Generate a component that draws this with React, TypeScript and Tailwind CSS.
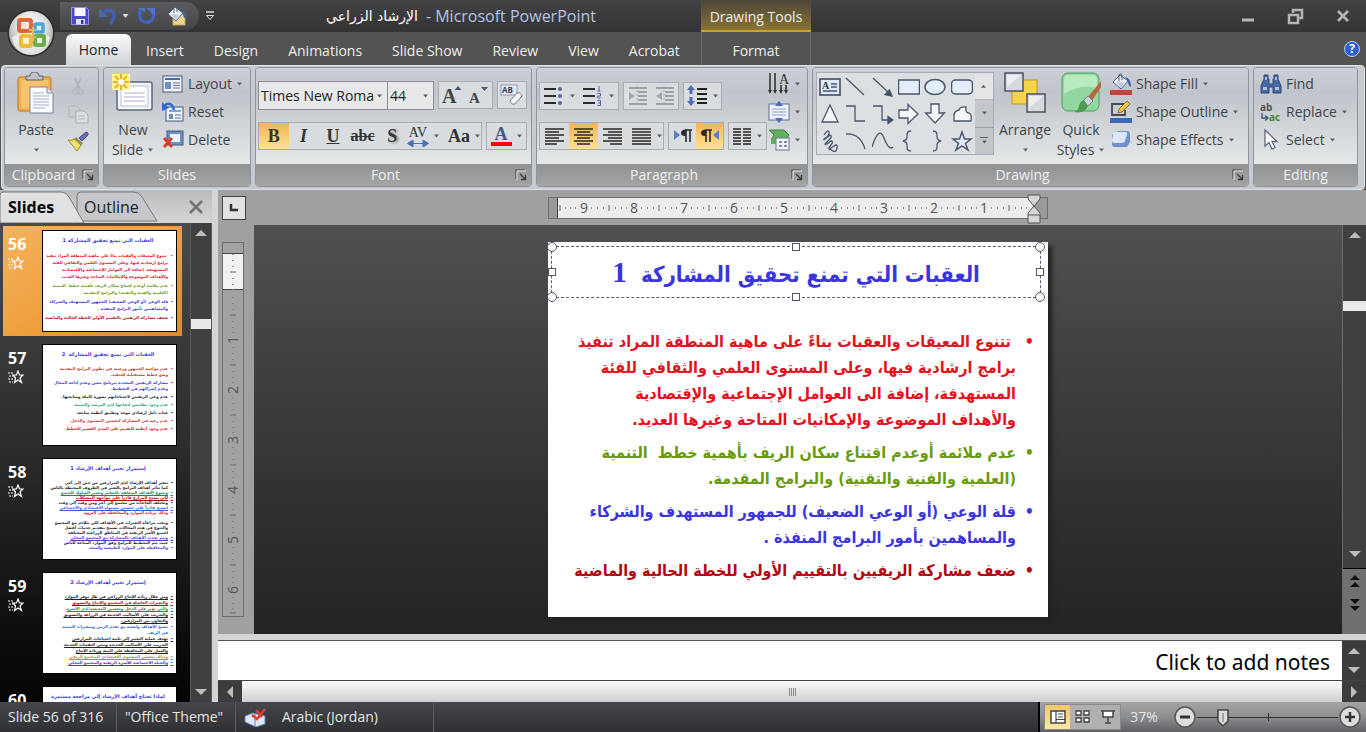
import React from 'react';

const ARABIC = "font-['DejaVu_Sans','Open_Sans',sans-serif]";
const ARABIC_NARROW = "font-['DejaVu_Sans_Condensed','DejaVu_Sans',sans-serif]";

type IconProps = { children: React.ReactNode; w?: number; h?: number };

const Icon = ({ children, w = 22, h = 22 }: IconProps) => (
  <svg width={w} height={h} viewBox={`0 0 ${w} ${h}`} fill="none" className="shrink-0" aria-hidden="true">
    {children}
  </svg>
);

const Caret = () => (
  <svg width="7" height="4" viewBox="0 0 7 4" className="shrink-0" aria-hidden="true">
    <path d="M1 0.5h5L3.5 3.5z" fill="#5a6068" />
  </svg>
);

const Launcher = () => (
  <Icon w={12} h={12}>
    <path d="M1 10V1h9" stroke="#4a4a4a" strokeWidth="1.2" />
    <path d="M2 11V2h9" stroke="#e8e8e8" />
    <path d="M5 5l5 5M10.500 6v4.500H6" stroke="#3a3a3a" strokeWidth="1.300" />
  </Icon>
);

/* ---------- ribbon icons ---------- */

const OfficeLogo = () => (
  <svg width="50" height="50" viewBox="0 0 50 50" aria-hidden="true">
    <defs>
      <radialGradient id="orb" cx="50%" cy="35%" r="65%">
        <stop offset="0" stopColor="#ffffff" />
        <stop offset="0.5" stopColor="#e2e3e5" />
        <stop offset="1" stopColor="#9b9da0" />
      </radialGradient>
    </defs>
    <circle cx="25" cy="25" r="23.500" fill="#2b2b2b" />
    <circle cx="25" cy="25" r="22" fill="url(#orb)" />
    <path d="M6 29q19-9 38 0q-2 17-19 18Q8 46 6 29z" fill="#fff" opacity="0.65" />
    <rect x="13" y="12" width="12" height="11" rx="1.500" stroke="#e2683b" strokeWidth="4" fill="#fbe3d5" />
    <rect x="29" y="16" width="8" height="8" rx="1" stroke="#4da4d8" strokeWidth="3.500" fill="#d8f0fb" />
    <rect x="15" y="28" width="10" height="10" rx="1.500" stroke="#f0bb44" strokeWidth="4" fill="#fff3ca" />
    <rect x="29" y="28" width="9" height="9" rx="1" stroke="#6dae4c" strokeWidth="4" fill="#e5f6d4" />
    <path d="M23 22h7M23 29h7M27 19v14" stroke="#eab45a" strokeWidth="2" />
  </svg>
);

const SaveIcon = () => (
  <Icon w={20} h={20}>
    <path d="M1.500 1.500h15l2 2v15h-17z" fill="#4a4cc4" stroke="#8f90ea" />
    <rect x="4.500" y="2" width="11" height="8" fill="#f5f6ff" />
    <rect x="6" y="13" width="9" height="5.500" fill="#dfe3f4" />
    <rect x="11" y="14" width="2.500" height="4" fill="#3a3c8c" />
  </Icon>
);

const UndoIcon = () => (
  <Icon w={20} h={20}>
    <path d="M4 8q6-6 11-2q3 5-3 12" stroke="#3f62b0" strokeWidth="3.500" />
    <path d="M1 2v9h9z" fill="#4668b8" />
  </Icon>
);

const RedoIcon = () => (
  <Icon w={20} h={20}>
    <path d="M4 3q-3 6 0 11q6 5 11 0q3-5 0-9" stroke="#3f66bc" strokeWidth="3.200" />
    <path d="M9 2h9v8z" fill="#4c74cc" />
    <path d="M1 2h7v4z" fill="#4c74cc" />
  </Icon>
);

const BucketIcon = ({ bar }: { bar?: string }) => (
  <Icon w={22} h={22}>
    {!bar && <rect x="8" y="9" width="12" height="11" fill="#efd58b" stroke="#c9a850" />}
    <path d="M3 9l7-7 8 6-7 8z" fill="#eef2f8" stroke="#48607e" />
    <path d="M9 8V2q2-3 3 1v4" stroke="#48607e" />
    <path d="M15 4q6 1 6 10q-3-1-3-6z" fill="#3265ab" />
    <path d="M6 9l8 1-3 5z" fill="#b9c8de" />
    {bar && <rect x="0" y="17" width="22" height="5" fill={bar} />}
  </Icon>
);

const PasteIcon = () => (
  <Icon w={40} h={42}>
    <rect x="2" y="5" width="33" height="34" rx="2" fill="#f0b04b" stroke="#b67b25" />
    <rect x="5" y="8" width="27" height="28" fill="#f7c46b" />
    <path d="M10 8V4h4q0-4 4.500-4T23 4h4v4z" fill="#bfc3c9" stroke="#5c6068" />
    <path d="M14 15h17l6 6v20H14z" fill="#fbfcff" stroke="#79839a" />
    <path d="M31 15v6h6" fill="#dfe6f2" stroke="#79839a" />
    <path d="M17 21h11M17 24h16M17 27h16M17 30h16M17 33h16M17 36h12" stroke="#a7afc6" />
  </Icon>
);

const CutIcon = () => (
  <Icon>
    <path d="M8 3l5 11M14 3L9 14" stroke="#b2b6bb" strokeWidth="2" />
    <circle cx="8" cy="17" r="2.500" stroke="#b6babf" strokeWidth="1.500" />
    <circle cx="14" cy="17" r="2.500" stroke="#b6babf" strokeWidth="1.500" />
  </Icon>
);

const CopyIcon = () => (
  <Icon>
    <path d="M2 3h8l3 3v8H2z" fill="#c9ccd0" stroke="#b1b5ba" />
    <path d="M9 8h8l4 4v8H9z" fill="#dcdfe2" stroke="#a9adb3" />
    <path d="M11 13h7M11 16h7" stroke="#b1b5ba" />
  </Icon>
);

const BrushIcon = () => (
  <Icon>
    <path d="M21 2l-2-1-7 6 3 3 6-6z" fill="#6a6db5" stroke="#4a4c8c" />
    <path d="M9 6l7 6-2 3-8-6z" fill="#8f965f" />
    <path d="M1 9q5 1 6-1l7 6q-3 5-4 6z" fill="#f1e070" stroke="#9c8730" />
  </Icon>
);

const NewSlideIcon = () => (
  <Icon w={42} h={42}>
    <rect x="5" y="10" width="35" height="28" rx="2" fill="#f4f6fa" stroke="#59677f" strokeWidth="1.500" />
    <rect x="9" y="14" width="27" height="20" fill="#fff" stroke="#b8c1d1" />
    <path d="M12 21h21M12 25h21M12 29h21" stroke="#a7afc6" />
    <rect x="0" y="2" width="18" height="16" fill="#fdf0a0" />
    <path d="M9 2v16M1 10h16M3 4l12 12M15 4L3 16" stroke="#e5b51c" strokeWidth="2" />
    <circle cx="9" cy="10" r="3" fill="#fff" />
  </Icon>
);

const LayoutIcon = () => (
  <Icon>
    <rect x="1" y="3" width="19" height="16" fill="#f1f5fb" stroke="#44587c" />
    <rect x="3" y="5" width="15" height="2" fill="#4b6aa2" />
    <rect x="3" y="9" width="6" height="7" fill="#6c8fc9" />
    <path d="M11 10h7M11 12.500h7M11 15h7" stroke="#5d6f92" />
  </Icon>
);

const ResetIcon = () => (
  <Icon>
    <rect x="4" y="6" width="17" height="14" fill="#f1f5fb" stroke="#44587c" />
    <rect x="7" y="9" width="12" height="2" fill="#8aa3cb" />
    <rect x="7" y="13" width="4" height="5" fill="#6c8fc9" />
    <path d="M13 14h6M13 17h6" stroke="#5d6f92" />
    <path d="M3 4q7-4 9 5" stroke="#2e6bd0" strokeWidth="2.500" />
    <path d="M0 1v9l7-3z" fill="#2e6bd0" />
  </Icon>
);

const DeleteIcon = () => (
  <Icon>
    <rect x="5" y="2" width="16" height="14" fill="#6d8fc6" stroke="#44587c" />
    <rect x="8" y="5" width="10" height="8" fill="#eef4fc" />
    <path d="M2 9l8 9M10 9l-8 9" stroke="#dc3a2b" strokeWidth="2.800" />
  </Icon>
);

const ClearFormatIcon = () => (
  <Icon w={24} h={22}>
    <rect x="1" y="1" width="16" height="10" fill="#e8edf5" stroke="#8c98ad" />
    <text x="2" y="9" fontSize="8" fontWeight="700" fill="#33425c" fontFamily="Open Sans">AB</text>
    <path d="M10 17l7-8q4-1 5 3l-7 8q-4 1-5-3z" fill="#f8fafd" stroke="#6a7890" />
  </Icon>
);

const GrowIcon = ({ small }: { small?: boolean }) => (
  <Icon w={22} h={22}>
    <text x="1" y="19" fontSize={small ? 15 : 20} fontWeight="700" fill="#444" fontFamily="Liberation Serif">A</text>
    {small ? <path d="M13 3h7l-3.500 4z" fill="#4a5a78" /> : <path d="M13.500 6h7L17 2z" fill="#4a5a78" />}
  </Icon>
);

const BulletsIcon = () => (
  <Icon>
    <path d="M1 4h12M1 11h12M1 18h12" stroke="#2b2b2b" strokeWidth="1.800" />
    <circle cx="17" cy="4" r="2" fill="#5562ad" />
    <circle cx="17" cy="11" r="2" fill="#5562ad" />
    <circle cx="17" cy="18" r="2" fill="#5562ad" />
  </Icon>
);

const NumberingIcon = () => (
  <Icon>
    <path d="M1 4h12M1 11h12M1 18h12" stroke="#2b2b2b" strokeWidth="1.800" />
    <path d="M17 1v5M15.500 6h3M15.500 8.500h3v2.500h-3v2h3M15.500 15.500h3v5h-3M16 18h2" stroke="#5562ad" />
  </Icon>
);

const IndentIcon = ({ flip }: { flip?: boolean }) => (
  <Icon>
    <path d="M2 3h18M11 7h9M11 11h9M11 15h9M2 19h18" stroke="#898d92" strokeWidth="1.500" />
    <path d={flip ? 'M8 7v8L2 11z' : 'M2 7v8l6-4z'} fill="#a4a8ad" />
    <path d="M10 1v20" stroke="#a4a8ad" strokeDasharray="2 2" />
  </Icon>
);

const SpacingIcon = () => (
  <Icon>
    <path d="M11 4h10M11 9h10M11 14h10M11 18h10" stroke="#222" strokeWidth="1.800" />
    <path d="M5 0l4 5H6.500v4h-3V5H1zM5 21l4-5H6.500v-4h-3v4H1z" fill="#4c6cbc" />
  </Icon>
);

const AlignIcon = ({ kind }: { kind: 'left' | 'center' | 'right' | 'justify' }) => {
  const d = {
    left: 'M1 3h19M1 6h14M1 9h19M1 12h14M1 15h19M1 18h12',
    center: 'M1 3h19M4 6h13M1 9h19M4 12h13M1 15h19M4 18h13',
    right: 'M1 3h19M6 6h14M1 9h19M6 12h14M1 15h19M8 18h12',
    justify: 'M1 3h19M1 6h19M1 9h19M1 12h19M1 15h19M1 18h19',
  }[kind];
  return (
    <Icon w={21} h={20}>
      <path d={d} stroke="#2a2623" strokeWidth="1.700" />
    </Icon>
  );
};

const PilcrowIcon = ({ rtl }: { rtl?: boolean }) => (
  <Icon w={20} h={20}>
    <path d={rtl ? 'M19 4v10l-6-5z' : 'M1 4v10l6-5z'} fill="#5480cc" />
    <g transform={rtl ? undefined : 'translate(7 0)'}>
      <path d="M12 4H5M6 4v12M10 4v12" stroke="#2b2b2b" strokeWidth="1.600" />
      <path d="M6 3.500q-5 0-5 3.500t5 3z" fill="#2b2b2b" />
    </g>
  </Icon>
);

const ColumnsIcon = () => (
  <Icon w={20} h={20}>
    <path d="M1 3h8M1 6h8M1 9h8M1 12h8M1 15h8M1 18h8M11 3h8M11 6h8M11 9h8M11 12h8M11 15h8M11 18h8" stroke="#222" strokeWidth="1.700" />
  </Icon>
);

const TextDirectionIcon = () => (
  <Icon>
    <path d="M2 0v18M7 0v18M13 12v6M18 12v6" stroke="#333" strokeWidth="1.600" />
    <path d="M0 17h4l-2 4zM5 17h4l-2 4zM11 17h4l-2 4zM16 17h4l-2 4z" fill="#333" />
    <text x="11" y="11" fontSize="14" fill="#333" fontFamily="Liberation Serif">A</text>
  </Icon>
);

const AlignTextIcon = () => (
  <Icon>
    <rect x="1" y="3" width="20" height="16" fill="#eef3fb" stroke="#5e6f96" />
    <path d="M4 8h14M4 11h14M4 14h14" stroke="#8ba0cc" />
    <path d="M11 0l4 5H7zM11 22l4-5H7z" fill="#4a69ba" />
  </Icon>
);

const SmartArtIcon = () => (
  <Icon>
    <path d="M1 1h15l5 5-3 5H3l3-5z" fill="#62b05c" stroke="#3f8440" />
    <path d="M3 10h8v5H3z" fill="#62b05c" />
    <rect x="8" y="9" width="13" height="12" fill="#f3f6fb" stroke="#68758f" />
    <path d="M11 13h3M16 13h3M11 17h3M16 17h3" stroke="#7d8ca8" strokeWidth="2" />
  </Icon>
);

const ArrangeIcon = () => (
  <Icon w={42} h={42}>
    <rect x="8" y="8" width="25" height="24" fill="#f7d54a" stroke="#bd9522" />
    <rect x="1" y="1" width="18" height="18" fill="#d6d9de" stroke="#4c525c" strokeWidth="1.500" />
    <rect x="23" y="22" width="18" height="18" fill="#d6d9de" stroke="#4c525c" strokeWidth="1.500" />
    <path d="M3 3h14l-14 12zM25 24h14l-14 12z" fill="#eceef1" />
  </Icon>
);

const QuickStylesIcon = () => (
  <Icon w={42} h={42}>
    <rect x="2" y="1" width="37" height="38" rx="6" fill="#93d7a0" stroke="#4d9c5e" />
    <path d="M4 8q0-5 5-5h23q5 0 5 5v8q-16-5-33 6z" fill="#b9ebc0" />
    <path d="M41 9L27 26l4 4 10-15z" fill="#b9663c" />
    <path d="M28 24l-5 5 5 5 5-5z" fill="#cfd2d8" stroke="#7c8088" />
    <path d="M24 28q-4 1-5 6t-5 6q11 2 14-6z" fill="#4d9a52" />
  </Icon>
);

const OutlineIcon = () => (
  <Icon>
    <path d="M15 3H2v11h13V9" stroke="#454b55" strokeWidth="1.800" />
    <path d="M8 12l1-4 8-8 3 3-8 8z" fill="#f3c24e" stroke="#8b6a24" />
    <rect x="0" y="17" width="22" height="5" fill="#3c68b4" />
  </Icon>
);

const EffectsIcon = () => (
  <Icon>
    <path d="M2 7q0-2 2-3l4-2h9q3 0 3 3v8l-3 5H5q-3 0-3-3z" fill="#6f90cd" />
    <path d="M5 3h10q3 0 2 3l-2 6q-1 2-3 2H4q-2 0-2-2l1-7q0-2 2-2z" fill="#dbe7f8" />
  </Icon>
);

const FindIcon = () => (
  <Icon>
    <path d="M4 2h4v4h1v5h4V6h1V2h4v4l3 7v7h-8v-6H9v6H1v-7l3-7z" fill="#4668a4" stroke="#2e4674" />
    <path d="M3 14h4v3H3zM15 14h4v3h-4zM5 4h2v3H5zM15 4h2v3h-2z" fill="#a9c0e4" />
  </Icon>
);

const ReplaceIcon = () => (
  <Icon>
    <text x="0" y="10" fontSize="10" fontWeight="700" fill="#555" fontFamily="Open Sans">ab</text>
    <text x="9" y="20" fontSize="10" fontWeight="700" fill="#3b8a36" fontFamily="Open Sans">ac</text>
    <path d="M2 12v5h5M5 14.500l3 2.500-3 2.500" stroke="#44587c" strokeWidth="1.400" />
  </Icon>
);

const SelectIcon = () => (
  <Icon>
    <path d="M5 1v16l4-3.500L12 20l3-1.500-3-6h5z" fill="#fff" stroke="#59677f" strokeWidth="1.300" />
  </Icon>
);

const SHAPES: [string, React.ReactNode][] = [
  ['Text Box', <g><rect x="1" y="3" width="20" height="16" fill="#dfeaf8" strokeWidth="1.700" /><text x="3" y="13" fontSize="10" fontWeight="700" stroke="none" fill="#333" fontFamily="Liberation Serif">A</text><path d="M12 8h6M12 11h6M4 15h14" /></g>],
  ['Line', <path d="M1 2l18 17" />],
  ['Arrow', <g><path d="M1 2l16 15" /><path d="M20 20l-7-1.500 4.500-4.500z" fill="#3f4a63" /></g>],
  ['Rectangle', <rect x="0.500" y="4" width="21" height="14" fill="#e4eefa" strokeWidth="1.500" />],
  ['Oval', <ellipse cx="11" cy="11" rx="10" ry="7.500" fill="#e4eefa" strokeWidth="1.500" />],
  ['Rounded Rectangle', <rect x="0.500" y="4" width="21" height="14" rx="4" fill="#e4eefa" strokeWidth="1.500" />],
  ['Triangle', <path d="M11 2l8 17H3z" fill="#f4f6fa" />],
  ['Elbow Connector', <path d="M1 3h9v15h10" />],
  ['Elbow Arrow', <g><path d="M1 3h9v14h7" /><path d="M21 17l-5-3.500v7z" fill="#3f4a63" /></g>],
  ['Right Arrow', <path d="M1 7h9V1.500L20 11l-10 9.500V15H1z" fill="#f4f6fa" />],
  ['Down Arrow', <path d="M7 1v9H1.500L11 20l9.500-10H15V1z" fill="#f4f6fa" />],
  ['Freeform', <path d="M3 18v-7q1-3 5-4 1-4 7-3-1 6 3 6 3 1 2 8z" fill="#f4f6fa" />],
  ['Scribble', <path d="M5 5q4-6 5-3T5 9q-1 2 6-4 3 1-1 5t-4 4q0 2 6-3 3 0 0 4t-2 4 5-3 3 2-4 3-3-2" />],
  ['Curve', <path d="M1 4q14-1 19 15" />],
  ['Wave', <path d="M0 17Q7-5 12 8t9 9" />],
  ['Left Brace', <path d="M13 1q-4 0-4 4v2q0 3-4 4 4 1 4 4v2q0 4 4 4" />],
  ['Right Brace', <path d="M9 1q4 0 4 4v2q0 3 4 4-4 1-4 4v2q0 4-4 4" />],
  ['Star', <path d="M11 2l2.500 7H20l-5.500 4.500L17 20l-6-4-6 4 2.500-6.500L2 9h6.500z" fill="#dfeaf8" strokeWidth="1.500" />],
];

/* ---------- ribbon building blocks ---------- */

type GroupProps = { label: string; className: string; launcher?: boolean; children: React.ReactNode };

const Group = ({ label, className, launcher, children }: GroupProps) => (
  <section aria-label={label} className={`flex flex-col overflow-hidden rounded-sm border border-[#8f949b] ${className}`}>
    <div className="flex h-[96px] bg-linear-to-b from-[#cdd0d5] via-[#c0c4cb] via-25% to-[#e4e8e9]">{children}</div>
    <div className="flex h-[22px] items-center bg-linear-to-b from-[#8f9193] to-[#a3a5a6] text-sm text-[#f0f0f0]">
      <span className="flex-1 text-center">{label}</span>
      {launcher && (
        <button className="mr-1" aria-label={`${label} options`}>
          <Launcher />
        </button>
      )}
    </div>
  </section>
);

const RowButton = ({ icon, label, caret }: { icon: React.ReactNode; label: string; caret?: boolean }) => (
  <button className="flex h-7 items-center gap-1 whitespace-nowrap">
    {icon}
    <span>{label}</span>
    {caret && <Caret />}
  </button>
);

const Box = ({ className = '', children }: { className?: string; children: React.ReactNode }) => (
  <div className={`flex h-[28px] items-stretch border border-[#a9adb3] bg-[#d9dddf] ${className}`}>{children}</div>
);

type ToolProps = { label: string; active?: boolean; caret?: boolean; className?: string; children: React.ReactNode };

const Tool = ({ label, active, caret, className = '', children }: ToolProps) => (
  <button
    aria-label={label}
    className={`flex flex-1 items-center justify-center gap-1 leading-none text-[#333] ${active ? 'bg-linear-to-b from-[#f5b45a] to-[#fde28d]' : ''} ${className}`}
  >
    {children}
    {caret && <Caret />}
  </button>
);

const Combo = ({ label, value, className }: { label: string; value: string; className: string }) => (
  <div className={`relative h-[29px] border border-[#8a8d92] bg-[#e6e8e9] ${className}`}>
    <select aria-label={label} className="h-full w-full appearance-none overflow-hidden pr-3 pl-0.5 text-sm text-[#222]">
      <option>{value}</option>
    </select>
    <span className="pointer-events-none absolute top-0 right-1 flex h-full items-center">
      <Caret />
    </span>
  </div>
);

const Ribbon = () => (
  <div className="mx-px flex h-[125px] items-start gap-1 rounded-sm border border-[#dfe2e5] bg-[#c6cbd1] px-0.5 pt-px text-sm text-[#404448]">
    <Group label="Clipboard" launcher className="w-[95px]">
      <button className="flex w-[62px] flex-col items-center pt-1">
        <PasteIcon />
        <span className="mt-1.5 leading-5">Paste</span>
        <span className="mt-2"><Caret /></span>
      </button>
      <div className="flex flex-col pt-1">
        <button aria-label="Cut" className="flex h-7 items-center"><CutIcon /></button>
        <button aria-label="Copy" className="flex h-7 items-center"><CopyIcon /></button>
        <button aria-label="Format Painter" className="flex h-7 items-center"><BrushIcon /></button>
      </div>
    </Group>

    <Group label="Slides" className="w-[148px]">
      <button className="flex w-[58px] flex-col items-center pt-1">
        <NewSlideIcon />
        <span className="mt-1.5 leading-5">New</span>
        <span className="flex items-center gap-1 leading-5">Slide <Caret /></span>
      </button>
      <div className="flex flex-col pt-0.5">
        <RowButton icon={<LayoutIcon />} label="Layout" caret />
        <RowButton icon={<ResetIcon />} label="Reset" />
        <RowButton icon={<DeleteIcon />} label="Delete" />
      </div>
    </Group>

    <Group label="Font" launcher className="w-[277px]">
      <div className="flex flex-1 flex-col gap-3 pt-[13px] pr-1 pl-0.5">
        <div className="flex">
          <Combo label="Font name" value="Times New Roman" className="w-[130px]" />
          <Combo label="Font size" value="44" className="-ml-px w-[47px]" />
          <Box className="ml-1 w-[55px]">
            <Tool label="Grow Font"><GrowIcon /></Tool>
            <Tool label="Shrink Font"><GrowIcon small /></Tool>
          </Box>
          <Box className="ml-auto w-[30px]">
            <Tool label="Clear Formatting"><ClearFormatIcon /></Tool>
          </Box>
        </div>
        <div className="flex justify-between font-['Liberation_Serif',serif] text-lg font-bold">
          <Box className="w-[224px]">
            <Tool label="Bold" active>B</Tool>
            <Tool label="Italic"><i>I</i></Tool>
            <Tool label="Underline"><u>U</u></Tool>
            <Tool label="Strikethrough" className="text-base"><s>abc</s></Tool>
            <Tool label="Shadow"><span className="drop-shadow-[2px_1px_1px_#888]">S</span></Tool>
            <Tool label="Character Spacing" caret className="text-sm">
              <span className="flex flex-col items-center font-normal">
                AV
                <Icon w={22} h={7}><path d="M6 3.500h10M0.500 3.500L6 0v7zM21.500 3.500L16 0v7z" fill="#4c6cbc" stroke="#4c6cbc" /></Icon>
              </span>
            </Tool>
            <Tool label="Change Case" caret className="pl-2">Aa</Tool>
          </Box>
          <Box className="w-[41px]">
            <Tool label="Font Color" caret>
              <span className="border-b-4 border-[#f00] px-1 leading-4 text-[#41598c]">A</span>
            </Tool>
          </Box>
        </div>
      </div>
    </Group>

    <Group label="Paragraph" launcher className="w-[272px]">
      <div className="flex w-[231px] flex-col gap-3 pt-[14px] pl-0.5">
        <div className="flex gap-1">
          <Box className="w-[80px]">
            <Tool label="Bullets" caret><BulletsIcon /></Tool>
            <Tool label="Numbering" caret><NumberingIcon /></Tool>
          </Box>
          <Box className="w-[56px]">
            <Tool label="Decrease Indent"><IndentIcon /></Tool>
            <Tool label="Increase Indent"><IndentIcon flip /></Tool>
          </Box>
          <Box className="w-[39px]">
            <Tool label="Line Spacing" caret><SpacingIcon /></Tool>
          </Box>
        </div>
        <div className="flex gap-1">
          <Box className="w-[125px]">
            <Tool label="Align Left"><AlignIcon kind="left" /></Tool>
            <Tool label="Center" active><AlignIcon kind="center" /></Tool>
            <Tool label="Align Right"><AlignIcon kind="right" /></Tool>
            <Tool label="Justify" caret className="pl-1"><AlignIcon kind="justify" /></Tool>
          </Box>
          <Box className="w-[56px]">
            <Tool label="Left-to-Right"><PilcrowIcon /></Tool>
            <Tool label="Right-to-Left" active><PilcrowIcon rtl /></Tool>
          </Box>
          <Box className="w-[39px]">
            <Tool label="Columns" caret><ColumnsIcon /></Tool>
          </Box>
        </div>
      </div>
      <div className="flex flex-col pt-0.5">
        <button aria-label="Text Direction" className="flex h-7 items-center gap-1"><TextDirectionIcon /><Caret /></button>
        <button aria-label="Align Text" className="flex h-7 items-center gap-1"><AlignTextIcon /><Caret /></button>
        <button aria-label="Convert to SmartArt" className="flex h-7 items-center gap-1"><SmartArtIcon /><Caret /></button>
      </div>
    </Group>

    <Group label="Drawing" launcher className="flex-1">
      <div className="mt-1 ml-[3px] flex h-[83px] w-[178px] border border-[#a9adb3] bg-[#dce0e3]">
        <div className="grid flex-1 grid-cols-6 grid-rows-3">
          {SHAPES.map(([name, shape]) => (
            <button key={name} aria-label={name} className="flex items-center justify-center">
              <svg width="22" height="22" viewBox="0 0 22 22" fill="none" stroke="#4a566e" strokeWidth="1.300">{shape}</svg>
            </button>
          ))}
        </div>
        <div className="flex w-[18px] flex-col bg-[#c3c6ca]">
          <button aria-label="Row up" className="flex flex-1 rotate-180 items-center justify-center bg-[#e3e5e7]"><Caret /></button>
          <button aria-label="Row down" className="flex flex-1 items-center justify-center border-y border-[#9a9da2]"><Caret /></button>
          <button aria-label="More shapes" className="flex flex-1 flex-col items-center justify-center gap-0.5">
            <span className="h-px w-2 bg-[#5a6068]" />
            <Caret />
          </button>
        </div>
      </div>
      <button className="ml-1 flex w-[54px] flex-col items-center pt-1">
        <ArrangeIcon />
        <span className="mt-1.5 leading-5">Arrange</span>
        <span className="mt-2"><Caret /></span>
      </button>
      <button className="flex w-[58px] flex-col items-center pt-1">
        <QuickStylesIcon />
        <span className="mt-1.5 leading-5">Quick</span>
        <span className="flex items-center gap-1 leading-5">Styles <Caret /></span>
      </button>
      <div className="flex flex-col pt-0.5">
        <RowButton icon={<BucketIcon bar="#c0453a" />} label="Shape Fill" caret />
        <RowButton icon={<OutlineIcon />} label="Shape Outline" caret />
        <RowButton icon={<EffectsIcon />} label="Shape Effects" caret />
      </div>
    </Group>

    <Group label="Editing" className="mr-1 w-[105px]">
      <div className="flex flex-col pt-0.5 pl-1.5">
        <RowButton icon={<FindIcon />} label="Find" />
        <RowButton icon={<ReplaceIcon />} label="Replace" caret />
        <RowButton icon={<SelectIcon />} label="Select" caret />
      </div>
    </Group>
  </div>
);

/* ---------- header ---------- */

const TABS = ['Insert', 'Design', 'Animations', 'Slide Show', 'Review', 'View', 'Acrobat'];

const Header = () => (
  <header className="grid grid-cols-[60px_641px_110px_1fr] grid-rows-[32px_33px] bg-[#535353] text-sm text-[#eee]">
    <button aria-label="Office Button" className="row-span-2 bg-linear-to-b from-[#434345] via-[#333335] via-50% to-[#535353] to-50% pl-[6px]">
      <OfficeLogo />
    </button>
    <div className="flex items-center bg-linear-to-b from-[#434345] to-[#333335]">
      <div className="flex h-[28px] items-center gap-2 rounded-r-full bg-linear-to-b from-[#5b5b5e] to-[#454548] pr-3 pl-2.5">
        <button aria-label="Save"><SaveIcon /></button>
        <button aria-label="Undo" className="flex items-center gap-1">
          <UndoIcon />
          <svg width="7" height="4" viewBox="0 0 7 4"><path d="M0.500 0h6l-3 4z" fill="#ddd" /></svg>
        </button>
        <button aria-label="Redo"><RedoIcon /></button>
        <button aria-label="Fill"><BucketIcon /></button>
      </div>
      <button aria-label="Customize Quick Access Toolbar" className="ml-1.5">
        <Icon w={10} h={12}>
          <path d="M1 2h8" stroke="#ddd" strokeWidth="1.500" />
          <path d="M1.500 5.500h7L5 9.500z" stroke="#ddd" />
        </Icon>
      </button>
      <h1 className="flex flex-1 items-center justify-center gap-2 pl-1.5 text-base text-[#b4c4e4]">
        <span dir="rtl" lang="ar" className={`${ARABIC} text-sm text-white`}>الإرشاد الزراعي</span>
        <span>- Microsoft PowerPoint</span>
      </h1>
    </div>
    <div className="flex items-center justify-center border-b-2 border-[#c9a227] bg-linear-to-b from-[#4b4637] to-[#8a7434] pt-1">Drawing Tools</div>
    <div className="flex items-center justify-end gap-8 bg-linear-to-b from-[#434345] to-[#333335] pr-4 text-[#b5b5b5]">
      <button aria-label="Minimize"><Icon w={14} h={14}><path d="M1 11h12" stroke="currentColor" strokeWidth="3" /></Icon></button>
      <button aria-label="Restore"><Icon w={17} h={17}><path d="M6 5V2h9v8h-3" stroke="currentColor" strokeWidth="2.500" /><rect x="2" y="7" width="9" height="8" stroke="currentColor" strokeWidth="2.500" /></Icon></button>
      <button aria-label="Close"><Icon w={14} h={14}><path d="M2 2l10 10M12 2L2 12" stroke="currentColor" strokeWidth="2.800" /></Icon></button>
    </div>

    <nav className="flex items-stretch pl-1.5" aria-label="Ribbon tabs">
      <button className="mt-0.5 flex w-[65px] items-center justify-center rounded-t-md bg-linear-to-b from-[#fafafa] to-[#cfd3d7] text-[#222]">Home</button>
      {TABS.map((tab) => (
        <button key={tab} className="px-[15px] pt-1 whitespace-nowrap">{tab}</button>
      ))}
    </nav>
    <button className="border-x border-[#6f6b5c] pt-1">Format</button>
    <div className="flex items-center justify-end pr-1.5">
      <button aria-label="Help" className="flex size-4 items-center justify-center rounded-full border border-[#b9cdf6] bg-[#2e5fd6] text-xs font-bold text-white">?</button>
    </div>
  </header>
);

/* ---------- slide content ---------- */

type Para = { color: string; lines: string[] };

const PARAS: Para[] = [
  {
    color: 'text-[#e8101c]',
    lines: [
      ' تتنوع المعيقات والعقبات بناءً على ماهية المنطقة المراد تنفيذ',
      'برامج ارشادية فيها، وعلى المستوى العلمي والثقافي للفئة',
      'المستهدفة، إضافة الى العوامل الإجتماعية والإقتصادية',
      'والأهداف الموضوعة والإمكانيات المتاحة وغيرها العديد.',
    ],
  },
  {
    color: 'text-[#6a9a10]',
    lines: ['عدم ملائمة أوعدم اقتناع سكان الريف بأهمية خطط  التنمية', '(العلمية والفنية والتقنية) والبرامج المقدمة.'],
  },
  {
    color: 'text-[#3a35e0]',
    lines: ['قلة الوعي (أو الوعي الضعيف) للجمهور المستهدف والشركاء', 'والمساهمين بأمور البرامج المنفذة .'],
  },
  { color: 'text-[#b4040f]', lines: ['ضعف مشاركة الريفيين بالتقييم الأولي للخطة الحالية والماضية'] },
];

type ThumbData = { no: number; title: string; leading: string; paras: Para[] };

const THUMBS: ThumbData[] = [
  { no: 56, title: 'العقبات التي تمنع تحقيق المشاركة 1', leading: 'leading-[7px] gap-0.5', paras: PARAS },
  {
    no: 57,
    title: 'العقبات التي تمنع تحقيق المشاركة  2',
    leading: 'leading-[6px] gap-0.5',
    paras: [
      { color: 'text-[#c0392b]', lines: ['عدم مواءمة الجمهور ورغبته في تطوير البرامج المقدمة', 'وضع خطط مستقبلية للتنفيذ.'] },
      { color: 'text-[#3a35e0]', lines: ['مشاركة الريفيين المحددة ببرنامج معين وعدم إتاحة المجال', 'وعدم إشراكهم في التخطيط.'] },
      { color: 'text-[#222]', lines: ['عدم وعي الريفيين لاحتياجاتهم بصورة كاملة ومتابعتها.'] },
      { color: 'text-[#2e9e7a]', lines: ['عدم وجود مقاييس لنجاحها لدى المرشد والتنمية.'] },
      { color: 'text-[#222]', lines: ['غياب دليل إرشادي موحد وتطبيق أنظمة متابعة.'] },
      { color: 'text-[#c0392b]', lines: ['عدم رغبة في المشاركة لتحسين المستوى والدخل.'] },
      { color: 'text-[#e8101c]', lines: ['عدم وجود أنظمة للتقييم على المدى القصير للخطط.'] },
    ],
  },
  {
    no: 58,
    title: 'إستمرار تغيير أهداف الإرشاد 1',
    leading: 'leading-[5px]',
    paras: [
      { color: 'text-[#222]', lines: ['تتغير أهداف الإرشاد لدى المزارعين من حين إلى آخر.', 'كما تتأثر أهداف البرامج بالتغير في الظروف المحيطة بالناس'] },
      { color: 'text-[#178a4c] underline', lines: ['وتتنوع الأهداف المتعلقة بالتعليم وتغيير السلوك للجميع'] },
      { color: 'text-[#b4040f] underline', lines: ['لكي يصبح المزارع قادراً على مواجهة المشكلات'] },
      { color: 'text-[#222]', lines: ['وتختلف الحاجات من مجتمع إلى آخر ومن وقت إلى وقت'] },
      { color: 'text-[#2e5fd6] underline', lines: ['ليصبح قادراً على تحسين مستواه الاقتصادي والاجتماعي'] },
      { color: 'text-[#e8101c]', lines: ['وذلك بزيادة الموارد والمحافظة على الثروة.', ' '] },
      { color: 'text-[#222]', lines: ['ويجب مراعاة التغيرات في الأهداف لكي تتلاءم مع المجتمع', 'والتنوع في هذه المجالات يسمح بتقديم خدمات أفضل', 'لجميع الأسر الريفية في المناطق الزراعية المختلفة'] },
      { color: 'text-[#5a35d0] underline', lines: ['ويتم تحديد الأهداف بالمشاركة مع المجتمع المحلي'] },
      { color: 'text-[#222]', lines: ['حيث يتم التخطيط للبرامج وفق الموارد المتاحة للناس'] },
      { color: 'text-[#5a35d0]', lines: ['والمحافظة على الموارد الطبيعية والبيئة.'] },
    ],
  },
  {
    no: 59,
    title: 'إستمرار تغيير أهداف الإرشاد 2',
    leading: 'leading-[6px]',
    paras: [
      { color: 'text-[#222] underline', lines: ['ومن خلال زيادة الإنتاج الزراعي في ظل توفر الموارد'] },
      { color: 'text-[#b4040f] underline', lines: ['والتغيرات الحاصلة في المجتمع والإنتاج والتسويق'] },
      { color: 'text-[#178a4c] underline', lines: ['والتي تؤثر على الدخل وتحسين المعيشة لدى الأسرة'] },
      { color: 'text-[#222] underline', lines: ['والتدريب على الأساليب الحديثة في الزراعة والتسويق', 'والتعاون بين المزارعين.'] },
      { color: 'text-[#2e5fd6]', lines: ['تصبح الأهداف واضحة مع تقدم الزمن ومتغيرات التنمية', 'في الريف.'] },
      { color: 'text-[#222] underline', lines: ['تهدف عملية التغيير إلى تلبية احتياجات المزارعين', 'التدريب على الأساليب الجديدة وتبني التقنيات الحديثة', 'والعمل على المحافظة على البيئة وزيادة الإنتاج'] },
      { color: 'text-[#d9791c] underline', lines: ['وبذلك يتحسن المستوى الاقتصادي للمجتمع الريفي'] },
      { color: 'text-[#3a35e0] underline', lines: ['والحياة الاجتماعية للأسرة الريفية والمجتمع المحلي'] },
    ],
  },
  { no: 60, title: 'لماذا تحتاج أهداف الإرشاد إلى مراجعة مستمرة', leading: '', paras: [] },
];

const StarMark = () => (
  <svg width="16" height="14" viewBox="0 0 16 14" fill="none" stroke="#fff" aria-hidden="true">
    <path d="M10 1l1.500 4H15l-3 3 1.500 4.500L10 10l-3.500 2.500L7.500 8 5 5h3.500z" strokeWidth="1.200" />
    <path d="M0 3h6M1 6h4M0 9h6M1 12h4" strokeDasharray="2 1" />
  </svg>
);

const Thumb = ({ no, title, leading, paras }: ThumbData) => {
  const active = no === 56;
  return (
    <li className={`flex h-[110px] shrink-0 py-1 pr-[4px] pl-[5px] ${active ? 'bg-linear-to-br from-[#f6b25c] via-[#f0a040] to-[#e08a22]' : ''}`}>
      <div className="flex w-[34px] flex-col gap-0.5 pt-1 text-white">
        <span className="text-base leading-5 font-bold">{no}</span>
        <StarMark />
      </div>
      <div dir="rtl" lang="ar" className={`${ARABIC} h-[102px] w-[135px] overflow-hidden border border-black bg-white pr-[3px] text-[4px] font-bold whitespace-pre`}>
        <div className="pt-1.5 pb-2 text-center text-[5px] leading-[7px] text-[#3a35e0]">{title}</div>
        <div className={`flex flex-col ${leading}`}>
          {paras.map((p, i) => (
            <div key={i} className={`flex ${p.color}`}>
              <span className="w-[5px] shrink-0">•</span>
              <div>
                {p.lines.map((line) => (
                  <div key={line}>{line}</div>
                ))}
              </div>
            </div>
          ))}
        </div>
      </div>
    </li>
  );
};

const Arrow = ({ dir }: { dir: 'up' | 'down' | 'left' | 'right' }) => {
  const d = { up: 'M0 9h12L6 3z', down: 'M0 3h12L6 9z', left: 'M9 0v12L3 6z', right: 'M3 0v12l6-6z' }[dir];
  return (
    <svg width="12" height="12" viewBox="0 0 12 12" aria-hidden="true">
      <path d={d} fill="#bdbdbd" />
    </svg>
  );
};

const SlidePane = () => (
  <aside className="flex w-[212px] shrink-0 flex-col bg-linear-to-b from-[#505050] via-[#2c2c2c] to-[#050505]">
    <div className="relative flex h-[33px] items-center bg-linear-to-b from-[#b9bbbd] to-[#d4d6d8] pr-2 text-base text-[#222]">
      <svg width="165" height="33" viewBox="0 0 165 33" className="absolute top-0 left-0" aria-hidden="true">
        <path d="M77 31V6q0-4 4-4h53q5 0 8 5l15 24z" fill="#c5c7ca" stroke="#77797c" />
        <path d="M0 33V5q0-3 3-3h57q6 0 9 5l15 26z" fill="#dfe1e3" stroke="#77797c" />
      </svg>
      <button className="relative w-[76px] pl-2 text-left font-bold text-black">Slides</button>
      <button className="relative pl-2">Outline</button>
      <button aria-label="Close pane" className="ml-auto">
        <Icon w={16} h={16}><path d="M2 2l12 12M14 2L2 14" stroke="#707274" strokeWidth="2.500" /></Icon>
      </button>
    </div>
    <div className="flex min-h-0 flex-1">
      <ul className="flex min-w-0 flex-1 flex-col gap-1 overflow-hidden pt-[3px] pr-2 pl-[3px]">
        {THUMBS.map((t) => <Thumb key={t.no} {...t} />)}
      </ul>
      <div className="flex w-[22px] flex-col items-center justify-between border-x border-[#5a5a5a] bg-[#404040] py-1">
        <button aria-label="Scroll up"><Arrow dir="up" /></button>
        <div className="mt-[80px] mb-auto h-2.5 w-full bg-[#e9e9e9]" />
        <button aria-label="Scroll down"><Arrow dir="down" /></button>
      </div>
    </div>
  </aside>
);

const TickStrip = () => (
  <svg width="38" height="8" viewBox="0 0 38 8" className="shrink-0" aria-hidden="true">
    <path d="M19 1v6" stroke="#666" />
    <path d="M1 4h1M7 4h1M13 4h1M25 4h1M31 4h1M36 4h1" stroke="#777" strokeWidth="1.500" />
  </svg>
);

const Ruler = () => (
  <div className="flex h-[22px] w-[500px] items-stretch border border-[#6e6e6e] bg-[#9a9a9a] text-sm text-[#555]">
    <div className="ml-2 flex w-[478px] items-center overflow-hidden border-x border-[#444] bg-[#ececec]">
      <svg width="20" height="8" viewBox="0 0 20 8" className="shrink-0"><path d="M2 1v6" stroke="#666" /><path d="M7 4h1M12 4h1M17 4h1" stroke="#777" strokeWidth="1.500" /></svg>
      {[9, 8, 7, 6, 5, 4, 3, 2, 1].map((n) => (
        <div key={n} className="flex w-[50px] shrink-0 items-center">
          <span className="w-3 text-center">{n}</span>
          <TickStrip />
        </div>
      ))}
    </div>
    <div className="relative">
      <svg width="14" height="32" viewBox="0 0 14 32" className="absolute -top-1 -left-2" aria-hidden="true">
        <path d="M1 1h12v4l-6 7-6-7zM7 12l6 7v10H1V19zM1 21h12" fill="#d6d6d6" stroke="#555" />
      </svg>
    </div>
  </div>
);

const VerticalRuler = () => (
  <div className="flex h-[375px] w-[22px] flex-col items-center overflow-hidden border border-[#6e6e6e] bg-[#a2a2a2] text-sm text-[#555]">
    <div className="mt-2.5 mb-1.5 flex h-[37px] w-full shrink-0 items-center justify-center border-y border-[#444] bg-[#f2f2f2]">
      <div className="rotate-90"><TickStrip /></div>
    </div>
    {[1, 2, 3, 4, 5, 6].map((n) => (
      <div key={n} className="flex h-[50px] w-full shrink-0 flex-col items-center justify-end">
        <div className="flex h-[38px] w-2 items-center justify-center"><div className="rotate-90"><TickStrip /></div></div>
        <span className="flex h-3 -rotate-90 items-center leading-3">{n}</span>
      </div>
    ))}
    <svg width="8" height="18" viewBox="0 0 8 18" className="shrink-0" aria-hidden="true">
      <path d="M4 1v1M4 7v1M4 12v1" stroke="#777" strokeWidth="1.500" />
      <path d="M1 17h6" stroke="#666" />
    </svg>
  </div>
);

/* selection frame handles round the title placeholder */
const HANDLES = [
  '-top-[5px] -left-[5px] rounded-full size-[10px]',
  '-top-[5px] -right-[5px] rounded-full size-[10px]',
  '-bottom-[5px] -left-[5px] rounded-full size-[10px]',
  '-bottom-[5px] -right-[5px] rounded-full size-[10px]',
  '-top-1 left-1/2 -ml-1 size-2',
  '-bottom-1 left-1/2 -ml-1 size-2',
  'top-1/2 -left-1 -mt-1 size-2',
  'top-1/2 -right-1 -mt-1 size-2',
];

const Slide = () => (
  <article dir="rtl" lang="ar" className={`${ARABIC_NARROW} h-[375px] w-[500px] bg-white pt-1 pr-[7px] pl-[3px] font-bold shadow-[4px_4px_4px_#222]`}>
    <div className="relative flex h-[52px] items-center justify-center border border-dashed border-[#55597a]">
      <h2 className="text-[22px] whitespace-pre text-[#3a35e0]">
        العقبات التي تمنع تحقيق المشاركة  <span className="font-['Liberation_Serif',serif] text-3xl">1</span>
      </h2>
      {HANDLES.map((pos) => (
        <span key={pos} className={`absolute border border-[#50566e] bg-white ${pos}`} />
      ))}
    </div>
    <ul className="flex flex-col gap-[7px] pt-[31px] pr-[7px] text-base leading-[26px] whitespace-pre">
      {PARAS.map((p) => (
        <li key={p.color} className={`flex ${p.color}`}>
          <span className="w-[18px] shrink-0">•</span>
          <div>
            {p.lines.map((line) => (
              <div key={line}>{line}</div>
            ))}
          </div>
        </li>
      ))}
    </ul>
  </article>
);

const Editor = () => (
  <main className="flex min-w-0 flex-1 flex-col">
    <div className="flex h-[35px] items-center bg-[#a0a0a0]">
      <div className="flex w-[36px] shrink-0 pl-1">
        <button aria-label="Tab stop" className="flex size-6 items-center justify-center border border-[#444] bg-[#e2e2e2]">
          <Icon w={10} h={10}><path d="M2 1v6h7" stroke="#333" strokeWidth="2.500" /></Icon>
        </button>
      </div>
      <div className="flex flex-1 justify-center"><Ruler /></div>
      <div className="w-6 shrink-0" />
    </div>
    <div className="flex min-h-0 flex-1">
      <div className="flex w-[36px] items-center bg-[#a0a0a0] pl-1"><VerticalRuler /></div>
      <div className="flex min-w-0 flex-1 items-center justify-center overflow-hidden bg-linear-to-b from-[#505050] to-[#232325]"><Slide /></div>
      <div className="flex w-6 flex-col items-center border-l border-[#6a6a6a] bg-[#404040] pt-1">
        <button aria-label="Previous line"><Arrow dir="up" /></button>
        <div className="mt-[60px] h-2.5 w-full bg-[#e9e9e9]" />
        <button aria-label="Next line" className="mt-auto mb-2"><Arrow dir="down" /></button>
        <div className="flex h-[66px] w-full flex-col items-center gap-3 border-t border-black bg-[#707070] pt-1.5">
          <button aria-label="Previous slide"><Icon w={10} h={12}><path d="M0 5h10L5 0zM0 12h10L5 7z" fill="#111" /></Icon></button>
          <button aria-label="Next slide"><Icon w={10} h={12}><path d="M0 0h10L5 5zM0 7h10l-5 5z" fill="#111" /></Icon></button>
        </div>
      </div>
    </div>
    <div className="h-[7px] border-b border-[#555] bg-[#d3d5d7]" />
    <div className="flex h-[39px]">
      <label className="flex min-w-0 flex-1 bg-white">
        <input aria-label="Notes" placeholder="Click to add notes" className="w-full pt-1 pr-3 text-right font-['Noto_Sans','Open_Sans',sans-serif] text-[21px] text-black placeholder:text-black" />
      </label>
      <div className="flex w-6 flex-col items-center justify-around bg-[#3c3c3c]">
        <Arrow dir="up" />
        <Arrow dir="down" />
      </div>
    </div>
    <div className="flex h-[22px] items-stretch border-t border-[#444] bg-[#3c3c3c]">
      <button aria-label="Scroll left" className="flex w-6 items-center justify-center"><Arrow dir="left" /></button>
      <div className="flex flex-1 items-center justify-center gap-px bg-linear-to-b from-[#fafafa] to-[#cfcfcf]">
        {[1, 2, 3, 4].map((n) => <span key={n} className="h-2 w-px bg-[#888]" />)}
      </div>
      <button aria-label="Scroll right" className="flex w-6 items-center justify-center"><Arrow dir="right" /></button>
    </div>
  </main>
);

const StatusBar = () => (
  <footer className="flex h-[30px] shrink-0 items-stretch bg-linear-to-b from-[#46474c] to-[#2f3033] text-sm text-[#e6e6e6]">
    <div className="flex w-[117px] items-center border-r border-[#5c5d61] pl-2 whitespace-nowrap">Slide 56 of 316</div>
    <div className="flex w-[119px] items-center border-r border-[#5c5d61] pl-2 whitespace-nowrap">"Office Theme"</div>
    <button className="flex w-[198px] items-center gap-4 border-r border-[#5c5d61] pl-2">
      <Icon w={22} h={20}>
        <path d="M1 9l8-3 12 3v8l-9 3-11-5z" fill="#dfe7f5" stroke="#5f7fbd" />
        <path d="M11 6v13" stroke="#5f7fbd" />
        <path d="M8 8l5 4L21 2M12 3l6 7" stroke="#d8402c" strokeWidth="2.500" />
      </Icon>
      Arabic (Jordan)
    </button>
    <div className="ml-auto flex items-center border-l-2 border-black bg-linear-to-b from-[#a4a5a7] via-[#8d8e90] to-[#5f6064] pl-1">
      <div className="flex h-[26px] border border-[#8a8a8a]">
        <button aria-label="Normal view" className="flex w-[25px] items-center justify-center bg-linear-to-b from-[#eec768] to-[#fbe9a4]">
          <Icon w={16} h={14}><rect x="1" y="1" width="14" height="12" fill="#fff" stroke="#444" strokeWidth="1.500" /><path d="M6 1v12M8 4h5M8 7h5M6 9.500h9" stroke="#444" strokeWidth="1.200" /></Icon>
        </button>
        <button aria-label="Slide sorter" className="flex w-[25px] items-center justify-center bg-[#b0b0b0]">
          <Icon w={16} h={14}><path d="M1 1h5v4H1zM9 1h5v4H9zM1 8h5v4H1zM9 8h5v4H9z" fill="#fff" stroke="#444" strokeWidth="1.300" /></Icon>
        </button>
        <button aria-label="Slide show" className="flex w-[25px] items-center justify-center bg-[#b0b0b0]">
          <Icon w={16} h={14}><path d="M1 1h14M3 1v6h10V1M8 7v5M5 13h6" fill="#fff" stroke="#444" strokeWidth="1.500" /></Icon>
        </button>
      </div>
      <span className="w-[46px] text-center">37%</span>
      <div className="flex w-[195px] items-center justify-center pl-1.5">
        <button aria-label="Zoom out"><Icon w={24} h={24}><circle cx="12" cy="12" r="10" fill="#ddd" stroke="#555" strokeWidth="1.500" /><path d="M7 12h10" stroke="#333" strokeWidth="3" /></Icon></button>
        <div className="relative flex h-5 flex-1 items-center">
          <span className="h-px w-full bg-[#333]" />
          <span className="absolute top-1.5 left-1/2 h-2 w-px bg-[#333]" />
          <svg width="12" height="18" viewBox="0 0 12 18" className="absolute top-0.5 left-5" aria-hidden="true">
            <path d="M1 1h10v11l-5 5-5-5z" fill="#ddd" stroke="#444" strokeWidth="1.500" />
            <path d="M6 4v9" stroke="#666" />
          </svg>
          <input type="range" aria-label="Zoom" defaultValue={20} className="absolute inset-0 w-full opacity-0" />
        </div>
        <button aria-label="Zoom in"><Icon w={24} h={24}><circle cx="12" cy="12" r="10" fill="#ddd" stroke="#555" strokeWidth="1.500" /><path d="M7 12h10M12 7v10" stroke="#333" strokeWidth="2.500" /></Icon></button>
      </div>
      <span className="w-1" />
    </div>
  </footer>
);

const App = () => (
  <div className="flex h-screen flex-col overflow-hidden bg-[#535353] font-['Open_Sans','Noto_Sans',sans-serif]">
    <Header />
    <Ribbon />
    <div className="flex min-h-0 flex-1">
      <SlidePane />
      <div className="w-[6px] shrink-0 bg-[#d3d5d7]" />
      <Editor />
    </div>
    <StatusBar />
  </div>
);

export default App;
